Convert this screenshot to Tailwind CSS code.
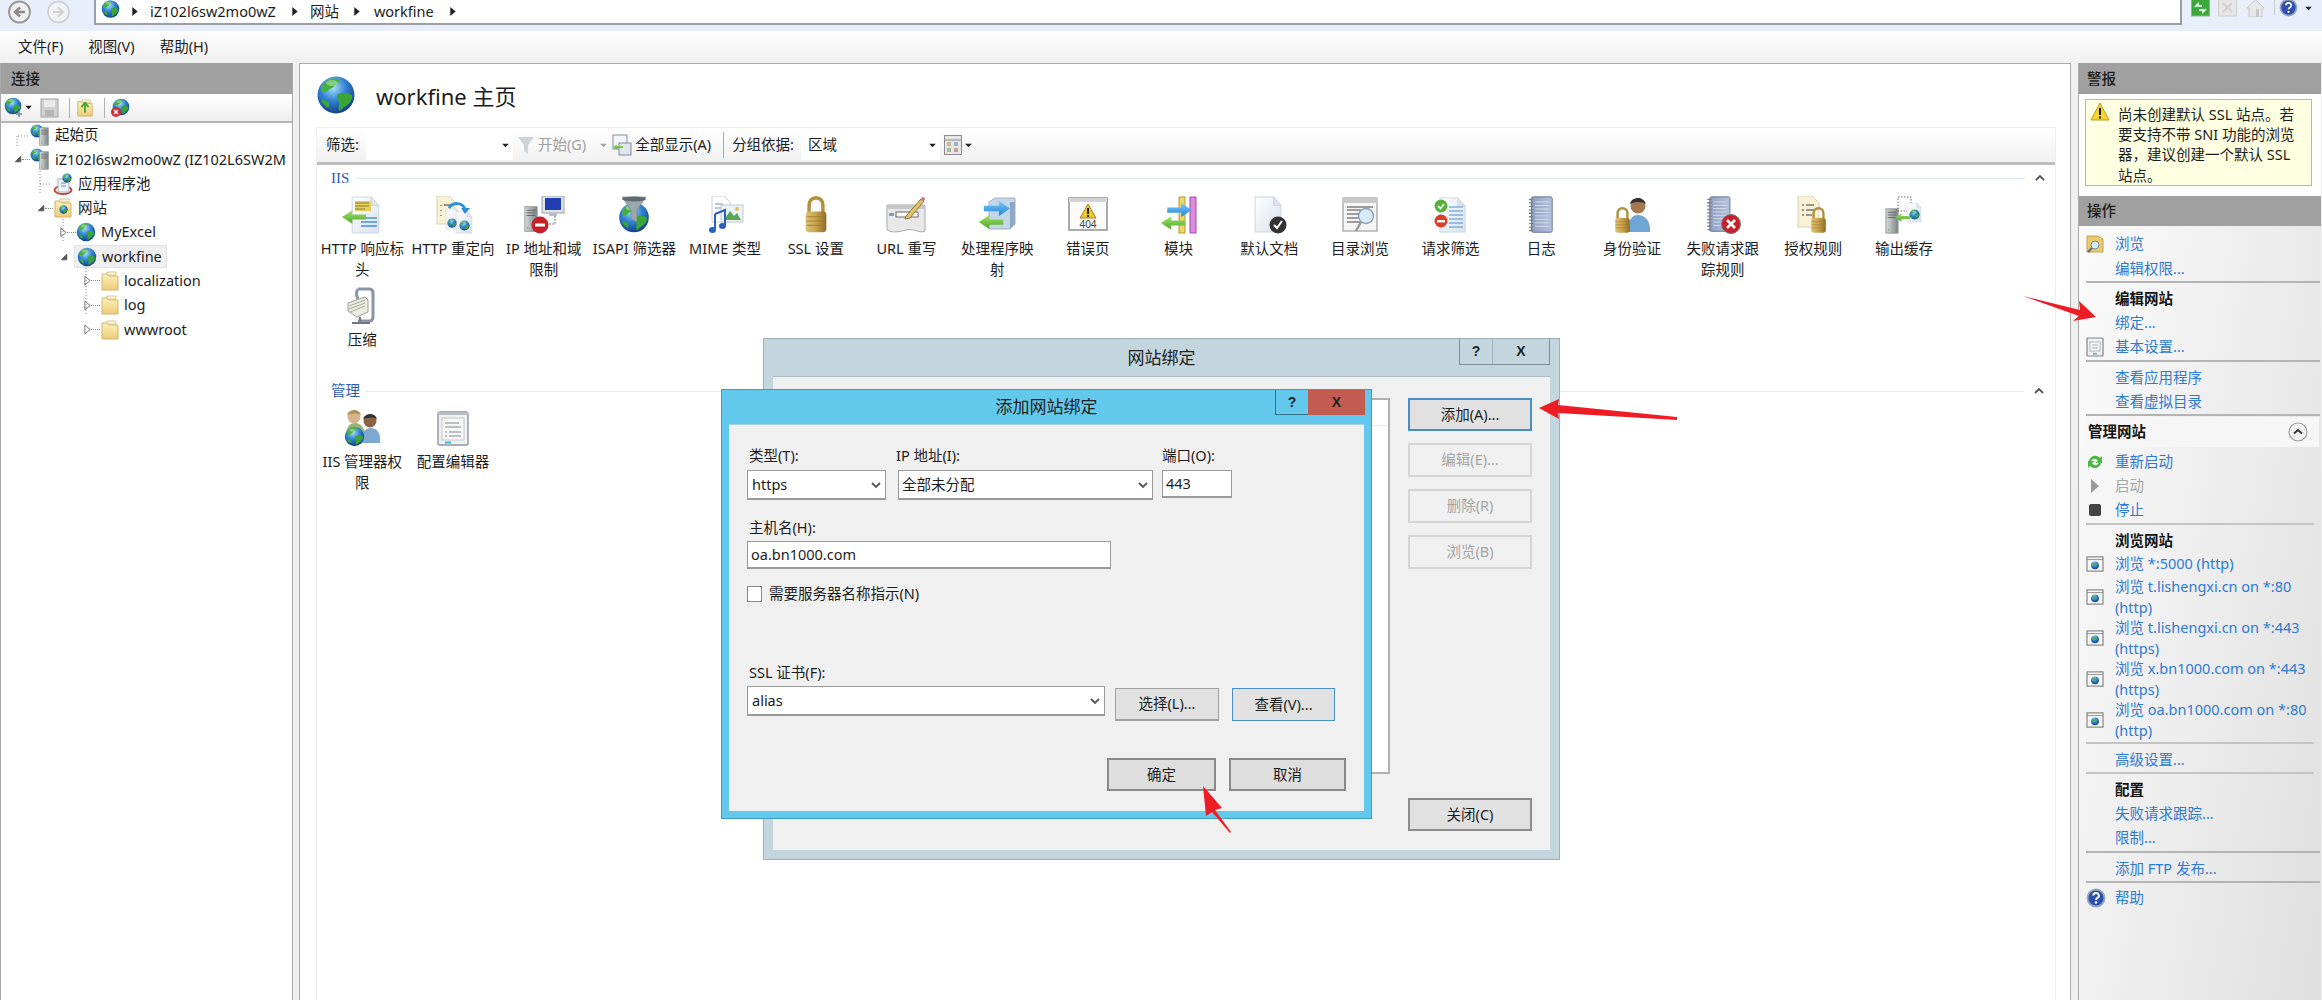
<!DOCTYPE html>
<html lang="zh-CN">
<head>
    <meta charset="UTF-8">
    <title>IIS 管理器</title>
    <script src="https://cdn.jsdelivr.net/npm/@tailwindcss/browser@4"></script>
</head>
<body class="relative w-[2322px] h-[1000px] overflow-hidden bg-[#f0f0f0] text-[14.5px] text-[#1c1c1c] font-['Noto_Sans','Noto_Sans_CJK_SC',sans-serif]">

<!-- shared icons -->
<svg class="absolute w-0 h-0">
    <defs>
        <radialGradient id="gGlobe" cx="0.42" cy="0.3" r="0.8">
            <stop offset="0" stop-color="#a5e0fa"/><stop offset="0.45" stop-color="#2f80d2"/><stop offset="1" stop-color="#0c2f78"/>
        </radialGradient>
        <linearGradient id="gGold" x1="0" y1="0" x2="1" y2="0">
            <stop offset="0" stop-color="#e0c476"/><stop offset="0.5" stop-color="#c9a24c"/><stop offset="1" stop-color="#8e6d28"/>
        </linearGradient>
        <linearGradient id="gPage" x1="0" y1="0" x2="1" y2="1">
            <stop offset="0" stop-color="#ffffff"/><stop offset="1" stop-color="#d8e2ee"/>
        </linearGradient>
        <linearGradient id="gFolder" x1="0" y1="0" x2="0" y2="1">
            <stop offset="0" stop-color="#fdf0bb"/><stop offset="1" stop-color="#eccd78"/>
        </linearGradient>
        <linearGradient id="gBlueArrow" x1="0" y1="0" x2="0" y2="1">
            <stop offset="0" stop-color="#7cc8f5"/><stop offset="1" stop-color="#1f86d8"/>
        </linearGradient>
        <linearGradient id="gGreenArrow" x1="0" y1="0" x2="0" y2="1">
            <stop offset="0" stop-color="#a6e36a"/><stop offset="1" stop-color="#4aa82c"/>
        </linearGradient>
        <linearGradient id="gBook" x1="0" y1="0" x2="1" y2="0">
            <stop offset="0" stop-color="#8e9fc0"/><stop offset="1" stop-color="#b5c3dc"/>
        </linearGradient>
        <linearGradient id="gServer" x1="0" y1="0" x2="1" y2="0">
            <stop offset="0" stop-color="#d8dcdc"/><stop offset="1" stop-color="#7d8585"/>
        </linearGradient>

        <symbol id="globe" viewBox="0 0 40 40">
            <circle cx="20" cy="20" r="18.500" fill="url(#gGlobe)"/>
            <path d="M12 5c4-2 8-2 11 0 1 3-3 4-5 6-1 3-5 2-6 5-2 2-5 1-7 0 0-4 3-9 7-11z" fill="#46b03a"/>
            <path d="M22 19c4-2 10-1 14 1 1 5-3 9-6 11-3 1-4 4-7 5-1-4 1-6 0-9-1-3-3-6-1-8z" fill="#3aa636"/>
            <path d="M5 25c3-1 6 1 8 3 1 2 0 4-1 5-3-2-6-5-7-8z" fill="#3aa636"/>
            <ellipse cx="16" cy="8" rx="6" ry="3" fill="#fff" opacity=".35"/>
        </symbol>

        <symbol id="lock" viewBox="0 0 30 44">
            <path d="M7 20V10a8 8 0 0 1 16 0v10" fill="none" stroke="#b28f3c" stroke-width="4"/>
            <rect x="3" y="18" width="24" height="24" rx="4" fill="url(#gGold)"/>
            <path d="M4 24h22M4 29h22M4 34h22" stroke="#9b7a2e" stroke-width="1"/>
        </symbol>

        <symbol id="page" viewBox="0 0 32 40">
            <path d="M2 1h20l8 9v29H2z" fill="url(#gPage)" stroke="#cdd3da"/>
            <path d="M22 1v9h8z" fill="#dfe5ec" stroke="#cdd3da"/>
        </symbol>

        <symbol id="arrowR" viewBox="0 0 28 16">
            <path d="M0 5h16V0l12 8-12 8v-5H0z" fill="url(#gBlueArrow)"/>
        </symbol>
        <symbol id="arrowL" viewBox="0 0 28 16">
            <path d="M28 5H12V0L0 8l12 8v-5h16z" fill="url(#gGreenArrow)"/>
        </symbol>

        <symbol id="server" viewBox="0 0 16 30">
            <rect x="1" y="1" width="14" height="28" fill="url(#gServer)" stroke="#8a9090"/>
            <path d="M3 5h10M3 8h10M3 11h10" stroke="#555d5d"/>
            <circle cx="4" cy="25" r="1" fill="#5fcf3a"/>
        </symbol>

        <symbol id="book" viewBox="0 0 30 44">
            <rect x="4" y="1" width="24" height="41" rx="2" fill="url(#gBook)" stroke="#56688e"/>
            <path d="M8 7h16M8 11h16M8 15h16M8 19h16M8 23h16M8 27h16M8 31h16M8 35h16" stroke="#dce4f0"/>
            <path d="M1 4h5M1 8h5M1 12h5M1 16h5M1 20h5M1 24h5M1 28h5M1 32h5M1 36h5M1 40h5" stroke="#7c7f88" stroke-width="1.6"/>
        </symbol>

        <symbol id="folder" viewBox="0 0 20 20">
            <path d="M2 3h6l1 2h9v14H2z" fill="url(#gFolder)" stroke="#cfb56a"/>
            <path d="M7 1h9v3H7z" fill="#fff8dc" stroke="#c9b26c" stroke-width=".7"/>
        </symbol>

        <symbol id="win" viewBox="0 0 20 18">
            <rect x="1" y="1" width="18" height="16" fill="#f6f6f6" stroke="#8b8b8b" stroke-width="1.4"/>
            <path d="M1 4h18" stroke="#8b8b8b"/>
            <circle cx="10" cy="10.5" r="4.4" fill="url(#gGlobe)"/>
            <path d="M7.5 8.5c2-1 4-1 4.5 1-1 2-3 1-4.5 1z" fill="#4fae3a"/>
        </symbol>

        <symbol id="help" viewBox="0 0 20 20">
            <circle cx="10" cy="10" r="9.4" fill="#9aa4b8"/>
            <circle cx="10" cy="10" r="7.6" fill="#2c4fb0"/>
            <path d="M7.3 7.6a2.8 2.6 0 1 1 4.1 2.3c-1 .6-1.4 1-1.4 2" fill="none" stroke="#fff" stroke-width="1.9"/>
            <circle cx="10" cy="14.5" r="1.2" fill="#fff"/>
        </symbol>

        <symbol id="chev" viewBox="0 0 10 8">
            <path d="M1 2l4 4 4-4" fill="none" stroke="#555" stroke-width="1.8"/>
        </symbol>
        <symbol id="caret" viewBox="0 0 8 6">
            <path d="M0 1h8L4 5z" fill="#222"/>
        </symbol>
        <symbol id="tri" viewBox="0 0 8 12">
            <path d="M1 1l6 5-6 5z" fill="#fff" stroke="#666"/>
        </symbol>
        <symbol id="triOpen" viewBox="0 0 10 10">
            <path d="M8.5 1.500v7h-7z" fill="#555" stroke="#555"/>
        </symbol>
    </defs>
</svg>

<!-- address bar -->
<div class="flex h-[31px] bg-[#e8effb] overflow-hidden">
    <div class="flex w-[94px] pl-[8px] gap-[16px]">
        <svg class="w-[23px] h-[24px]" viewBox="0 0 23 24"><circle cx="11.500" cy="12" r="10.500" fill="#f0f0f0" stroke="#9a9a9a" stroke-width="2"/><path d="M17 12H8m4-4.500L7 12l5 4.500" fill="none" stroke="#8a8a8a" stroke-width="2.400"/></svg>
        <svg class="w-[23px] h-[24px]" viewBox="0 0 23 24"><circle cx="11.500" cy="12" r="10.500" fill="#f0f2f5" stroke="#cdcdcd" stroke-width="1.500"/><path d="M6 12h9m-4-4.500l5 4.500-5 4.500" fill="none" stroke="#d0d0d0" stroke-width="2"/></svg>
    </div>
    <div class="flex items-center w-[2088px] h-[25px] bg-white border-l-2 border-b-2 border-r-2 border-[#9aa0a6] pl-[5px]">
        <svg class="w-[19px] h-[20px] -mt-[6px]"><use href="#globe"/></svg>
        <svg class="w-[6px] h-[9px] ml-[12px]" viewBox="0 0 6 10"><path d="M0 0l6 5-6 5z" fill="#222"/></svg>
        <span class="ml-[12px]">iZ102l6sw2mo0wZ</span>
        <svg class="w-[6px] h-[9px] ml-[16px]" viewBox="0 0 6 10"><path d="M0 0l6 5-6 5z" fill="#222"/></svg>
        <span class="ml-[12px]">网站</span>
        <svg class="w-[6px] h-[9px] ml-[15px]" viewBox="0 0 6 10"><path d="M0 0l6 5-6 5z" fill="#222"/></svg>
        <span class="ml-[14px]">workfine</span>
        <svg class="w-[6px] h-[9px] ml-[16px]" viewBox="0 0 6 10"><path d="M0 0l6 5-6 5z" fill="#222"/></svg>
    </div>
    <div class="flex items-start pl-[9px]">
        <svg class="w-[19px] h-[17px]" viewBox="0 0 19 17"><rect x=".5" y="-2" width="18" height="18" fill="#3aa83a" stroke="#8fb48f"/><path d="M4 7l3-3v2h4M15 9l-3 3v-2H8" fill="none" stroke="#fff" stroke-width="1.600"/></svg>
        <svg class="w-[19px] h-[17px] ml-[8px]" viewBox="0 0 19 17"><rect x=".5" y="-2" width="18" height="18" fill="#e6e6e6" stroke="#cfcfcf"/><path d="M5 3l9 9M14 3l-9 9" stroke="#cfcfcf" stroke-width="2"/></svg>
        <svg class="w-[19px] h-[17px] ml-[9px]" viewBox="0 0 19 17"><path d="M1 8l8.500-8L18 8h-2v9H3V8z" fill="#e8e8e8" stroke="#c6c6c6"/><rect x="10" y="9" width="3" height="8" fill="#c6c6c6"/></svg>
        <div class="w-[1px] h-[15px] bg-[#c8ccd2] ml-[9px]"></div>
        <svg class="w-[19px] h-[17px] ml-[4px]" viewBox="0 0 20 18"><use href="#help" y="-2" width="20" height="20"/></svg>
        <svg class="w-[7px] h-[5px] ml-[7px] mt-[6px]"><use href="#caret"/></svg>
    </div>
</div>

<!-- menu -->
<div class="flex items-center h-[32px] pl-[18px] gap-[25px] bg-gradient-to-b from-[#fdfdfd] to-[#f0f0f0]">
    <span>文件(F)</span><span>视图(V)</span><span>帮助(H)</span>
</div>

<div class="flex h-[937px]">
    <!-- connections -->
    <div class="w-[293px] bg-white border-r border-[#a9a9a9] border-l border-l-[#a9a9a9]">
        <div class="flex items-center h-[31px] pl-[10px] bg-[#a0a0a0] font-medium">连接</div>
        <div class="flex items-center h-[29px] pl-[3px] bg-gradient-to-b from-white to-[#eeeeee] border-b-2 border-[#b4b4b4]">
            <svg class="w-[19px] h-[22px]" viewBox="0 0 19 22"><use href="#globe" width="18" height="18"/><path d="M12 17h6M15 14v6" stroke="#7a8a9a" stroke-width="1.600"/></svg>
            <svg class="w-[7px] h-[5px] ml-[2px]"><use href="#caret"/></svg>
            <svg class="w-[19px] h-[20px] ml-[8px]" viewBox="0 0 19 20"><rect x="1" y="1" width="17" height="18" fill="#cfcfcf" stroke="#a5a5a5"/><rect x="4" y="2" width="11" height="7" fill="#eaeaea"/><rect x="5" y="12" width="9" height="6" fill="#b5b5b5"/></svg>
            <div class="w-[1px] h-[20px] bg-[#b0b0b0] ml-[10px]"></div>
            <svg class="w-[18px] h-[20px] ml-[6px]" viewBox="0 0 20 20"><use href="#folder"/><path d="M10 15V6M6 9l4-5 4 5" fill="none" stroke="#44a52d" stroke-width="2"/></svg>
            <div class="w-[1px] h-[20px] bg-[#b0b0b0] ml-[10px]"></div>
            <svg class="w-[20px] h-[20px] ml-[5px]" viewBox="0 0 20 20"><use href="#globe" width="18" height="18" x="2"/><circle cx="6" cy="14" r="5" fill="#c83232"/><path d="M4 12l4 4M8 12l-4 4" stroke="#fff" stroke-width="1.300"/></svg>
        </div>

        <div class="relative">
            <svg class="absolute left-0 top-0 w-[120px] h-[220px]" viewBox="0 0 120 220">
                <path d="M16 13v12M39 48v24M62 96v24M85 145v48" fill="none" stroke="#888" stroke-dasharray="1 2"/>
                <path d="M17 13h11" fill="none" stroke="#888" stroke-dasharray="1 2"/>
                <path d="M39 61h12" fill="none" stroke="#888" stroke-dasharray="1 2"/>
            </svg>
            <div class="flex items-center h-[24.3px] pl-[29px]"><svg class="w-[20px] h-[22px]" viewBox="0 0 20 22"><use href="#globe" width="14" height="14" x="0"/><use href="#server" x="9" y="3" width="10" height="19"/></svg><span class="ml-[5px]">起始页</span></div>
            <div class="flex items-center h-[24.3px] pl-[13px]">
                <svg class="w-[8px] h-[8px]"><use href="#triOpen"/></svg><div class="w-[8px] border-t border-dotted border-[#888]"></div>
                <svg class="w-[20px] h-[22px]" viewBox="0 0 20 22"><use href="#globe" width="14" height="14" x="0"/><use href="#server" x="9" y="3" width="10" height="19"/></svg><span class="ml-[5px] whitespace-nowrap overflow-hidden">iZ102l6sw2mo0wZ (IZ102L6SW2M</span>
            </div>
            <div class="flex items-center h-[24.3px] pl-[52px]">
                <svg class="w-[20px] h-[22px]" viewBox="0 0 20 22"><ellipse cx="10" cy="17" rx="8.500" ry="4" fill="none" stroke="#c84a3a" stroke-width="2"/><rect x="5" y="6" width="11" height="13" fill="#eef2f7" stroke="#aab4c0"/><path d="M8 10h5M8 13h5" stroke="#6a8fc0"/><use href="#globe" x="9" y="0" width="10" height="10"/></svg><span class="ml-[5px]">应用程序池</span>
            </div>
            <div class="flex items-center h-[24.3px] pl-[36px]">
                <svg class="w-[8px] h-[8px]"><use href="#triOpen"/></svg><div class="w-[8px] border-t border-dotted border-[#888]"></div>
                <svg class="w-[20px] h-[20px]" viewBox="0 0 20 20"><use href="#folder"/><use href="#globe" x="6" y="7" width="9" height="9"/></svg><span class="ml-[5px]">网站</span>
            </div>
            <div class="flex items-center h-[24.3px] pl-[59px]">
                <svg class="w-[7px] h-[11px]"><use href="#tri"/></svg><div class="w-[9px] border-t border-dotted border-[#888]"></div>
                <svg class="w-[20px] h-[20px]"><use href="#globe"/></svg><span class="ml-[5px]">MyExcel</span>
            </div>
            <div class="flex items-center h-[24.3px] pl-[59px]">
                <svg class="w-[8px] h-[8px]"><use href="#triOpen"/></svg>
                <div class="flex items-center h-[23px] ml-[6px] pl-[2px] w-[93px] bg-[#efefef] border border-[#e2e2e2]">
                    <svg class="w-[20px] h-[20px]"><use href="#globe"/></svg><span class="ml-[5px]">workfine</span>
                </div>
            </div>
            <div class="flex items-center h-[24.3px] pl-[83px]">
                <svg class="w-[7px] h-[11px]"><use href="#tri"/></svg><div class="w-[9px] border-t border-dotted border-[#888]"></div>
                <svg class="w-[20px] h-[20px]"><use href="#folder"/></svg><span class="ml-[4px]">localization</span>
            </div>
            <div class="flex items-center h-[24.3px] pl-[83px]">
                <svg class="w-[7px] h-[11px]"><use href="#tri"/></svg><div class="w-[9px] border-t border-dotted border-[#888]"></div>
                <svg class="w-[20px] h-[20px]"><use href="#folder"/></svg><span class="ml-[4px]">log</span>
            </div>
            <div class="flex items-center h-[24.3px] pl-[83px]">
                <svg class="w-[7px] h-[11px]"><use href="#tri"/></svg><div class="w-[9px] border-t border-dotted border-[#888]"></div>
                <svg class="w-[20px] h-[20px]"><use href="#folder"/></svg><span class="ml-[4px]">wwwroot</span>
            </div>
        </div>
    </div>

    <!-- center pane -->
    <div class="w-[1772px] ml-[6px] bg-white border-l border-r border-t border-[#a9a9a9] overflow-hidden">
        <div class="flex items-center h-[63px] pl-[16px]">
            <svg class="w-[40px] h-[40px] mt-[-2px]"><use href="#globe"/></svg>
            <span class="ml-[20px] text-[22px] leading-none">workfine 主页</span>
        </div>

        <div class="ml-[16px] w-[1740px] h-[873px] border-l border-r border-[#efefef]">
            <div class="flex items-center h-[38px] pl-[9px] border-t border-[#eeeeee] border-b-[3px] border-b-[#bdbdbd] bg-gradient-to-b from-white to-[#f1f1f1]">
                <span>筛选:</span>
                <div class="flex items-center justify-end w-[147px] h-[30px] ml-[7px] pr-[4px] bg-white"><svg class="w-[7px] h-[5px]"><use href="#caret"/></svg></div>
                <svg class="w-[16px] h-[20px] ml-[5px]" viewBox="0 0 16 20"><path d="M0 2h16l-6 8v9l-4-3v-6z" fill="#cfd3d6"/></svg>
                <span class="ml-[4px] text-[#a0a0a0]">开始(G)</span>
                <svg class="w-[7px] h-[5px] ml-[14px] opacity-40"><use href="#caret"/></svg>
                <svg class="w-[20px] h-[22px] ml-[5px]" viewBox="0 0 20 22"><rect x="1" y="1" width="14" height="14" fill="#f4f6fa" stroke="#7f8ea0"/><rect x="7" y="9" width="12" height="12" fill="#dfe6ef" stroke="#7f8ea0"/><use href="#arrowL" x="1" y="10" width="10" height="6"/></svg>
                <span class="ml-[3px]">全部显示(A)</span>
                <div class="w-[1px] h-[26px] bg-[#a9a9a9] ml-[12px]"></div>
                <span class="ml-[8px]">分组依据:</span>
                <div class="flex items-center justify-between w-[139px] h-[30px] ml-[7px] pl-[7px] pr-[4px] bg-white"><span>区域</span><svg class="w-[7px] h-[5px]"><use href="#caret"/></svg></div>
                <svg class="w-[18px] h-[20px] ml-[4px]" viewBox="0 0 18 20"><rect x=".5" y=".5" width="17" height="19" fill="#e6e6e6" stroke="#8c8c8c"/><path d="M1 5h16" stroke="#8c8c8c"/><rect x="3" y="7" width="4" height="4" fill="#c9b98c"/><rect x="10" y="7" width="4" height="4" fill="#9ab4cf"/><rect x="3" y="13" width="4" height="4" fill="#a5bd92"/><rect x="10" y="13" width="4" height="4" fill="#c5a196"/></svg>
                <svg class="w-[7px] h-[5px] ml-[3px]"><use href="#caret"/></svg>
            </div>

            <!-- IIS section -->
            <div class="flex items-center h-[20px] mt-[3px] pl-[14px] pr-[10px]">
                <span class="text-[#2c5bb5] font-['Liberation_Serif',serif] text-[15px]">IIS</span>
                <div class="w-[1674px] h-[1px] bg-[#dce7f8] ml-[7px]"></div>
                <svg class="w-[10px] h-[8px] ml-[10px] rotate-180"><use href="#chev"/></svg>
            </div>
            <div class="grid grid-cols-[repeat(18,90.7px)] auto-rows-[91px] mt-[8px]">
                <div class="flex flex-col items-center"><svg class="w-[44px] h-[38px]" viewBox="0 0 44 38"><use href="#page" x="10" y="0" width="31" height="38"/><rect x="15" y="5" width="16" height="10" fill="#e8cf5a"/><path d="M15 7h14M15 10h14M15 13h10" stroke="#8a7a3a"/><path d="M21 22h16M21 26h16M21 30h16" stroke="#4a90d0" stroke-width="1.400"/><use href="#arrowL" x="2" y="14" width="24" height="14"/></svg><span class="w-[86px] mt-[4px] text-center leading-[21px]">HTTP 响应标头</span></div>
                <div class="flex flex-col items-center"><svg class="w-[44px] h-[38px]" viewBox="0 0 44 38"><path d="M6 0h12l6 6v22H6z" fill="#f8f1d4" stroke="#d8d2b8"/><path d="M10 9v1M10 14v1M10 19v1M13 9h8" stroke="#777" stroke-width="1.500"/><use href="#page" x="14" y="12" width="17" height="22"/><use href="#page" x="24" y="15" width="18" height="23"/><use href="#globe" x="16" y="22" width="10" height="10"/><use href="#globe" x="28" y="24" width="11" height="11"/><path d="M18 12c4-6 13-6 16 1" fill="none" stroke="#2d8fdc" stroke-width="3"/><path d="M30 12h9l-5 6z" fill="#2d8fdc"/></svg><span class="w-[86px] mt-[4px] text-center leading-[21px]">HTTP 重定向</span></div>
                <div class="flex flex-col items-center"><svg class="w-[44px] h-[38px]" viewBox="0 0 44 38"><use href="#server" x="2" y="9" width="14" height="28"/><rect x="20" y="0" width="22" height="17" fill="#dfe4ea" stroke="#9aa2ac"/><rect x="23" y="2" width="16" height="12" fill="#1f3fb0"/><path d="M27 17h8v3h-8z" fill="#b8bec5"/><path d="M33 20v8h-8" fill="none" stroke="#555" stroke-dasharray="1.500 1.500"/><circle cx="18" cy="29" r="8.500" fill="#c8202a"/><rect x="13" y="27.500" width="10" height="3" fill="#fff"/></svg><span class="w-[86px] mt-[4px] text-center leading-[21px]">IP 地址和域限制</span></div>
                <div class="flex flex-col items-center"><svg class="w-[44px] h-[38px]" viewBox="0 0 44 38"><use href="#globe" x="6" y="5" width="32" height="33"/><path d="M10 1h24l-9 13v12l-6-3v-9z" fill="#9aa8ae" stroke="#6f7d85" stroke-width=".6"/><ellipse cx="22" cy="3" rx="12" ry="2.500" fill="#5d6b70"/></svg><span class="w-[86px] mt-[4px] text-center leading-[21px]">ISAPI 筛选器</span></div>
                <div class="flex flex-col items-center"><svg class="w-[44px] h-[38px]" viewBox="0 0 44 38"><path d="M9 0h12l6 6v20H9z" fill="#fff" stroke="#ccd"/><path d="M12 8h8M12 12h10" stroke="#6d94c4"/><rect x="18" y="9" width="22" height="17" fill="#eef3f8" stroke="#bfc7d0"/><path d="M21 24l6-9 4 5 3-3 4 7z" fill="#5aa655"/><circle cx="34" cy="13" r="2" fill="#e0c25a"/><path d="M12 18v15M12 18l10-4v15" fill="none" stroke="#2a5fc0" stroke-width="2"/><ellipse cx="9.500" cy="34" rx="3.500" ry="3" fill="#2a5fc0"/><ellipse cx="19.500" cy="30" rx="3.500" ry="3" fill="#2a5fc0"/></svg><span class="w-[86px] mt-[4px] text-center leading-[21px]">MIME 类型</span></div>
                <div class="flex flex-col items-center"><svg class="w-[44px] h-[38px]" viewBox="0 0 44 38"><use href="#lock" x="9" y="0" width="26" height="38"/></svg><span class="w-[86px] mt-[4px] text-center leading-[21px]">SSL 设置</span></div>
                <div class="flex flex-col items-center"><svg class="w-[44px] h-[38px]" viewBox="0 0 44 38"><path d="M3 9h38v26c-6 3-10-3-19-1-8 2-13 3-19 0z" fill="#e8e8e8" stroke="#a8a8a8"/><path d="M3 9h38v4H3z" fill="#c7c7c7"/><rect x="12" y="16" width="22" height="5" fill="#fff" stroke="#666"/><rect x="5" y="17" width="5" height="3" fill="#6aa7d8"/><path d="M22 20L37 3l3 2-14 17-5 1z" fill="#e2c16a" stroke="#8d7430"/><circle cx="39" cy="3" r="2" fill="#d07a7a"/></svg><span class="w-[86px] mt-[4px] text-center leading-[21px]">URL 重写</span></div>
                <div class="flex flex-col items-center"><svg class="w-[44px] h-[38px]" viewBox="0 0 44 38"><path d="M14 6l6-4h20v26l-5 5H14z" fill="#c3d6ea" stroke="#9db2c9"/><path d="M35 6h5v22l-5 5z" fill="#8fa9c4"/><use href="#arrowR" x="8" y="5" width="28" height="15"/><use href="#arrowL" x="3" y="19" width="26" height="14"/></svg><span class="w-[86px] mt-[4px] text-center leading-[21px]">处理程序映射</span></div>
                <div class="flex flex-col items-center"><svg class="w-[44px] h-[38px]" viewBox="0 0 44 38"><rect x="3" y="2" width="38" height="32" fill="#fbfbfb" stroke="#888" stroke-width="1.400"/><rect x="3" y="2" width="38" height="4" fill="#d4d4d4"/><path d="M22 8l8 14H14z" fill="#f3c927" stroke="#9d8320"/><path d="M22 12v6M22 19v2" stroke="#111" stroke-width="1.800"/><text x="22" y="32" text-anchor="middle" font-size="10" fill="#444">404</text></svg><span class="w-[86px] mt-[4px] text-center leading-[21px]">错误页</span></div>
                <div class="flex flex-col items-center"><svg class="w-[44px] h-[38px]" viewBox="0 0 44 38"><rect x="22" y="1" width="6" height="36" fill="#edd66a" stroke="#b69b30"/><rect x="33" y="1" width="6" height="36" fill="#da8bdb" stroke="#a34fa5"/><use href="#arrowR" x="10" y="7" width="25" height="14"/><use href="#arrowL" x="4" y="20" width="24" height="14"/></svg><span class="w-[86px] mt-[4px] text-center leading-[21px]">模块</span></div>
                <div class="flex flex-col items-center"><svg class="w-[44px] h-[38px]" viewBox="0 0 44 38"><use href="#page" x="6" y="0" width="30" height="37"/><circle cx="31" cy="29" r="8.500" fill="#333"/><path d="M27 29l3 3 5-7" fill="none" stroke="#fff" stroke-width="2"/></svg><span class="w-[86px] mt-[4px] text-center leading-[21px]">默认文档</span></div>
                <div class="flex flex-col items-center"><svg class="w-[44px] h-[38px]" viewBox="0 0 44 38"><rect x="5" y="2" width="34" height="33" fill="#f5f5f5" stroke="#8c8c8c"/><rect x="5" y="2" width="34" height="5" fill="#c8c8c8"/><path d="M9 11h26M9 14h14M9 18h14M9 22h14M9 26h14" stroke="#444"/><circle cx="28" cy="20" r="7.500" fill="#d8ecf8" stroke="#8aa2b5" stroke-width="1.400"/><path d="M23 26l-5 9" stroke="#999" stroke-width="2.500"/></svg><span class="w-[86px] mt-[4px] text-center leading-[21px]">目录浏览</span></div>
                <div class="flex flex-col items-center"><svg class="w-[44px] h-[38px]" viewBox="0 0 44 38"><use href="#page" x="9" y="1" width="29" height="36"/><path d="M20 11h14M20 15h14M20 19h14M20 23h14M20 27h14M20 31h14" stroke="#4a90d0"/><circle cx="12" cy="10" r="6.500" fill="#5ab03c"/><path d="M9 10l2.500 2.500L15 8" fill="none" stroke="#fff" stroke-width="1.600"/><circle cx="12" cy="25" r="6.500" fill="#d8402a"/><rect x="8" y="24" width="8" height="2.400" fill="#fff"/></svg><span class="w-[86px] mt-[4px] text-center leading-[21px]">请求筛选</span></div>
                <div class="flex flex-col items-center"><svg class="w-[44px] h-[38px]" viewBox="0 0 44 38"><use href="#book" x="9" y="0" width="26" height="38"/></svg><span class="w-[86px] mt-[4px] text-center leading-[21px]">日志</span></div>
                <div class="flex flex-col items-center"><svg class="w-[44px] h-[38px]" viewBox="0 0 44 38"><path d="M19 36c-2-11 3-17 9-17s13 5 12 17z" fill="#6fa6d4"/><circle cx="28" cy="10" r="7.500" fill="#a67850"/><path d="M20 8c1-7 13-9 16 0-3-2-9-3-16 0z" fill="#333"/><use href="#lock" x="3" y="11" width="19" height="27"/></svg><span class="w-[86px] mt-[4px] text-center leading-[21px]">身份验证</span></div>
                <div class="flex flex-col items-center"><svg class="w-[44px] h-[38px]" viewBox="0 0 44 38"><use href="#book" x="5" y="0" width="26" height="37"/><circle cx="30" cy="28" r="9.500" fill="#c8202a" stroke="#777"/><path d="M26 24l8 8M34 24l-8 8" stroke="#fff" stroke-width="2.600"/></svg><span class="w-[86px] mt-[4px] text-center leading-[21px]">失败请求跟踪规则</span></div>
                <div class="flex flex-col items-center"><svg class="w-[44px] h-[38px]" viewBox="0 0 44 38"><path d="M7 0h14l7 7v24H7z" fill="#f8f1d4" stroke="#d8d2b8"/><path d="M11 9h2M15 9h8M11 14h2M15 14h8M11 19h2M15 19h6" stroke="#777" stroke-width="1.400"/><use href="#lock" x="18" y="11" width="19" height="27"/></svg><span class="w-[86px] mt-[4px] text-center leading-[21px]">授权规则</span></div>
                <div class="flex flex-col items-center"><svg class="w-[44px] h-[38px]" viewBox="0 0 44 38"><use href="#server" x="3" y="12" width="14" height="26"/><path d="M16 1h13v14H16z" fill="none" stroke="#666" stroke-dasharray="1.500 1.500"/><use href="#page" x="24" y="6" width="16" height="21"/><use href="#globe" x="27" y="13" width="11" height="11"/><use href="#arrowL" x="13" y="17" width="15" height="9"/></svg><span class="w-[86px] mt-[4px] text-center leading-[21px]">输出缓存</span></div>
                <div class="flex flex-col items-center"><svg class="w-[44px] h-[38px]" viewBox="0 0 44 38"><path d="M18 2h11c3 0 4 2 4 4v24c0 2-1 4-4 4H18" fill="none" stroke="#8b95a8" stroke-width="3"/><path d="M18 2c-2 3-2 6 0 10" fill="none" stroke="#8b95a8" stroke-width="3"/><path d="M8 16l17-6 3 3v12L17 30 8 24z" fill="#eceee2" stroke="#9b9f90"/><path d="M9 19l16-6M9 22l16-6M10 25l15-6" stroke="#a5a89a"/><path d="M20 30v4M12 36h18" stroke="#6f7784" stroke-width="2"/></svg><span class="w-[86px] mt-[4px] text-center leading-[21px]">压缩</span></div>
            </div>

            <!-- 管理 section -->
            <div class="flex items-center h-[20px] mt-[3px] pl-[14px] pr-[10px]">
                <span class="text-[#2c5bb5]">管理</span>
                <div class="w-[1658px] h-[1px] bg-[#dce7f8] ml-[6px]"></div>
                <svg class="w-[10px] h-[8px] ml-[10px] rotate-180"><use href="#chev"/></svg>
            </div>
            <div class="grid grid-cols-[repeat(18,90.7px)] mt-[8px]">
                <div class="flex flex-col items-center"><svg class="w-[44px] h-[38px]" viewBox="0 0 44 38"><path d="M7 28c-2-9 2-14 8-14s10 5 10 14z" fill="#9ab56c"/><circle cx="14" cy="8" r="6.500" fill="#d8b48c"/><path d="M7 6c2-6 12-7 14 0-4-2-9-2-14 0z" fill="#a8935a"/><path d="M22 34c-2-10 3-15 9-15s10 5 9 15z" fill="#7da8d0"/><circle cx="30" cy="12" r="6.500" fill="#8d6444"/><path d="M23 10c2-6 12-7 14 0-4-2-9-2-14 0z" fill="#333"/><use href="#globe" x="4" y="17" width="21" height="21"/></svg><span class="w-[86px] mt-[4px] text-center leading-[21px]">IIS 管理器权限</span></div>
                <div class="flex flex-col items-center"><svg class="w-[44px] h-[38px]" viewBox="0 0 44 38"><rect x="7" y="3" width="30" height="33" rx="2" fill="#eef0f2" stroke="#8d949c" stroke-width="1.400"/><rect x="7" y="3" width="30" height="3" fill="#b8bdc3"/><rect x="11" y="9" width="22" height="22" fill="#f7f7f7" stroke="#c8c8c8"/><path d="M14 14h14M14 18h16M14 23h2M18 23h12M14 27h2M18 27h12" stroke="#a9adb3" stroke-width="1.400"/><rect x="14" y="32.500" width="6" height="2" fill="#3ab4e6"/></svg><span class="w-[86px] mt-[4px] text-center leading-[21px]">配置编辑器</span></div>
            </div>
        </div>
    </div>

    <!-- right pane -->
    <div class="w-[243px] ml-[7px] bg-white border-l border-[#a9a9a9]">
        <div class="flex items-center h-[31px] pl-[8px] bg-[#a0a0a0] font-medium">警报</div>
        <div class="h-[102px] pt-[5px] pl-[6px] pr-[9px]">
            <div class="flex w-[227px] h-[87px] bg-[#ffffe1] border border-[#b8b8a0]">
                <svg class="w-[20px] h-[19px] ml-[4px] mt-[2px] shrink-0" viewBox="0 0 20 19"><path d="M10 1l9 17H1z" fill="#f6d32d" stroke="#b89c1e"/><path d="M10 6v7M10 14.500v2" stroke="#111" stroke-width="2"/></svg>
                <p class="ml-[8px] mt-[3.500px] leading-[20.400px] whitespace-nowrap">尚未创建默认 SSL 站点。若<br>要支持不带 SNI 功能的浏览<br>器，建议创建一个默认 SSL<br>站点。</p>
            </div>
        </div>
        <div class="flex items-center h-[30px] pl-[8px] bg-[#a0a0a0] font-medium">操作</div>

        <div class="h-[774px] pl-[7px] pr-[1px] pt-[6px] text-[#2f7ad0] bg-[linear-gradient(100deg,#fbfbfb,#dfdfdf)]">
            <div class="flex items-center h-[24px]"><svg class="w-[18px] h-[20px] shrink-0" viewBox="0 0 18 20"><path d="M1 2h11l5 3v13H1z" fill="#eccb6e" stroke="#bfa14e"/><circle cx="9" cy="11" r="4" fill="#d6ecf8" stroke="#6f8ba0"/><path d="M6 14l-4 4" stroke="#666" stroke-width="2"/></svg><span class="ml-[11px]">浏览</span></div>
            <div class="h-[24px] pl-[29px] leading-[24px]">编辑权限...</div>
            <div class="h-[2px] mt-[1px] mb-[3px] bg-[#b4b4b4]"></div>
            <div class="h-[24px] pl-[29px] leading-[24px] text-[#111] font-semibold">编辑网站</div>
            <div class="h-[24px] pl-[29px] leading-[24px]">绑定...</div>
            <div class="flex items-center h-[25px]"><svg class="w-[18px] h-[20px] shrink-0" viewBox="0 0 18 20"><rect x="1" y="1" width="16" height="18" rx="1" fill="#eef0f2" stroke="#7f868e" stroke-width="1.200"/><rect x="4" y="5" width="10" height="9" fill="#fafafa" stroke="#b0b4ba"/><path d="M6 8h6M6 11h6" stroke="#9aa"/><rect x="7" y="16" width="4" height="1.500" fill="#3ab4e6"/></svg><span class="ml-[11px]">基本设置...</span></div>
            <div class="h-[2px] mt-[1px] mb-[3px] bg-[#b4b4b4]"></div>
            <div class="h-[24px] pl-[29px] leading-[24px]">查看应用程序</div>
            <div class="h-[24px] pl-[29px] leading-[24px]">查看虚拟目录</div>
            <div class="h-[2px] mt-[1px] bg-[#b4b4b4]"></div>
            <div class="flex items-center justify-between h-[30px] mt-[1px] pl-[2px] pr-[11px] mr-[1px] bg-[#f6f6f6] text-[#111] font-semibold">
                <span>管理网站</span>
                <svg class="w-[20px] h-[20px]" viewBox="0 0 20 20"><circle cx="10" cy="10" r="9" fill="#f1f1f1" stroke="#9c9c9c" stroke-width="1.200"/><path d="M6 11.500L10 8l4 3.500" fill="none" stroke="#333" stroke-width="1.800"/></svg>
            </div>
            <div class="flex items-center h-[24px] mt-[3px]"><svg class="w-[18px] h-[20px] shrink-0" viewBox="0 0 18 20"><path d="M3 9c1-5 7-7 11-3l2-2v7H9l3-2C10 6 6 6 5 10z" fill="#4cb843"/><path d="M15 11c-1 5-7 7-11 3l-2 2V9h7l-3 2c2 3 6 3 7-1z" fill="#4cb843"/></svg><span class="ml-[11px]">重新启动</span></div>
            <div class="flex items-center h-[24px] text-[#a8a8a8]"><svg class="w-[18px] h-[20px] shrink-0" viewBox="0 0 18 20"><path d="M5 3l8 7-8 7z" fill="#9a9a9a"/></svg><span class="ml-[11px]">启动</span></div>
            <div class="flex items-center h-[24px]"><svg class="w-[18px] h-[20px] shrink-0" viewBox="0 0 18 20"><rect x="3" y="4" width="12" height="12" rx="2" fill="#444"/></svg><span class="ml-[11px]">停止</span></div>
            <div class="h-[2px] mt-[1px] mb-[3px] mr-[6px] bg-[#c4c4c4]"></div>
            <div class="h-[24px] pl-[29px] leading-[24px] text-[#111] font-semibold">浏览网站</div>
            <div class="flex items-center h-[24px]"><svg class="w-[18px] h-[16px] shrink-0"><use href="#win"/></svg><span class="ml-[11px]">浏览 *:5000 (http)</span></div>
            <div class="flex items-center h-[41px]"><svg class="w-[18px] h-[16px] shrink-0"><use href="#win"/></svg><span class="ml-[11px] leading-[20.500px]">浏览 t.lishengxi.cn on *:80<br>(http)</span></div>
            <div class="flex items-center h-[41px]"><svg class="w-[18px] h-[16px] shrink-0"><use href="#win"/></svg><span class="ml-[11px] leading-[20.500px]">浏览 t.lishengxi.cn on *:443<br>(https)</span></div>
            <div class="flex items-center h-[41px]"><svg class="w-[18px] h-[16px] shrink-0"><use href="#win"/></svg><span class="ml-[11px] leading-[20.500px]">浏览 x.bn1000.com on *:443<br>(https)</span></div>
            <div class="flex items-center h-[41px]"><svg class="w-[18px] h-[16px] shrink-0"><use href="#win"/></svg><span class="ml-[11px] leading-[20.500px]">浏览 oa.bn1000.com on *:80<br>(http)</span></div>
            <div class="h-[2px] mt-[2px] mb-[3px] mr-[6px] bg-[#c4c4c4]"></div>
            <div class="h-[24px] pl-[29px] leading-[24px]">高级设置...</div>
            <div class="h-[2px] mt-[1px] mb-[3px] mr-[6px] bg-[#c4c4c4]"></div>
            <div class="h-[24px] pl-[29px] leading-[24px] text-[#111] font-semibold">配置</div>
            <div class="h-[24px] pl-[29px] leading-[24px]">失败请求跟踪...</div>
            <div class="h-[24px] pl-[29px] leading-[24px]">限制...</div>
            <div class="h-[2px] mt-[2px] mb-[3px] bg-[#b4b4b4]"></div>
            <div class="h-[24px] pl-[29px] leading-[24px]">添加 FTP 发布...</div>
            <div class="h-[2px] mt-[1px] mb-[3px] bg-[#b4b4b4]"></div>
            <div class="flex items-center h-[24px]"><svg class="w-[20px] h-[20px] shrink-0"><use href="#help"/></svg><span class="ml-[9px]">帮助</span></div>
        </div>
    </div>
</div>

<!-- 网站绑定 dialog -->
<div class="absolute left-[763px] top-[338px] w-[797px] h-[522px] bg-[#c3d6dd] border border-[#9fb0b8] flex flex-col">
    <div class="relative flex items-center justify-center h-[37px] text-[17px] text-[#222]">
        网站绑定
        <div class="absolute right-[9px] top-0 flex h-[26px] border border-t-0 border-[#7f8f96] font-['Liberation_Sans',sans-serif] font-bold text-[14px]">
            <span class="flex items-center justify-center w-[33px] border-r border-[#a0b0b7]">?</span>
            <span class="flex items-center justify-center w-[56px]">X</span>
        </div>
    </div>
    <div class="flex mx-[9px] h-[474px] pt-[21px] bg-[#f0f0f0] border-t border-[#aebcc3]">
        <div class="w-[609px] h-[376px] ml-[8px] pt-[25px] bg-white border-2 border-[#b0b0b0]">
            <div class="h-[1px] bg-[#e8e8e8]"></div>
        </div>
        <div class="flex flex-col w-[124px] h-[433px] ml-[18px] gap-[12px]">
            <div class="flex items-center justify-center h-[33px] bg-[#e1e1e1] border-2 border-[#4a8fc4]">添加(A)...</div>
            <div class="flex items-center justify-center h-[34px] text-[#a5a5a5] border-2 border-[#d4d4d4]">编辑(E)...</div>
            <div class="flex items-center justify-center h-[34px] text-[#a5a5a5] border-2 border-[#d4d4d4]">删除(R)</div>
            <div class="flex items-center justify-center h-[34px] text-[#a5a5a5] border-2 border-[#d4d4d4]">浏览(B)</div>
            <div class="flex items-center justify-center h-[33px] mt-auto bg-[#e1e1e1] border-2 border-[#8c8c8c]">关闭(C)</div>
        </div>
    </div>
</div>

<!-- 添加网站绑定 dialog -->
<div class="absolute left-[721px] top-[389px] w-[651px] h-[430px] bg-[#63c9ec] border border-[#3f9cc0] flex flex-col">
    <div class="relative flex items-center justify-center h-[34px] text-[17px] text-[#222]">
        添加网站绑定
        <div class="absolute right-[6px] top-0 flex h-[25px] font-['Liberation_Sans',sans-serif] font-bold text-[14px]">
            <span class="flex items-center justify-center w-[33px] border border-t-0 border-r-0 border-[#2f6f88]">?</span>
            <span class="flex items-center justify-center w-[57px] bg-[#c25b50]">X</span>
        </div>
    </div>
    <div class="mx-[7px] w-[635px] h-[387px] pl-[18px] pt-[20px] bg-[#f0f0f0] border-t border-[#a8d0de]">
        <div class="flex">
            <div class="w-[139px]">
                <div class="h-[25px] pl-[2px] leading-[20px]">类型(T):</div>
                <div class="flex items-center justify-between h-[30px] pl-[4px] pr-[4px] bg-white border border-b-2 border-[#9a9a9a]"><span>https</span><svg class="w-[10px] h-[8px]"><use href="#chev"/></svg></div>
            </div>
            <div class="w-[255px] ml-[12px]">
                <div class="h-[25px] -ml-[2px] leading-[20px]">IP 地址(I):</div>
                <div class="flex items-center justify-between h-[30px] pl-[3px] pr-[4px] bg-white border border-b-2 border-[#9a9a9a]"><span>全部未分配</span><svg class="w-[10px] h-[8px]"><use href="#chev"/></svg></div>
            </div>
            <div class="w-[70px] ml-[9px]">
                <div class="h-[25px] leading-[20px]">端口(O):</div>
                <div class="flex items-center h-[28px] pl-[3px] bg-white border border-b-2 border-[#9a9a9a]">443</div>
            </div>
        </div>
        <div class="h-[24px] mt-[17px] pl-[2px] leading-[20px]">主机名(H):</div>
        <div class="flex items-center w-[364px] h-[28px] pl-[3px] bg-white border border-b-2 border-[#9a9a9a]">oa.bn1000.com</div>
        <div class="flex items-center h-[16px] mt-[17px]">
            <div class="w-[15px] h-[16px] bg-white border border-[#8a8a8a]"></div>
            <span class="ml-[7px]">需要服务器名称指示(N)</span>
        </div>
        <div class="h-[24px] mt-[60px] pl-[2px] leading-[20px]">SSL 证书(F):</div>
        <div class="flex items-start">
            <div class="flex items-center justify-between w-[358px] h-[30px] pl-[4px] pr-[4px] bg-white border border-b-2 border-[#9a9a9a]"><span>alias</span><svg class="w-[10px] h-[8px]"><use href="#chev"/></svg></div>
            <div class="flex items-center justify-center w-[104px] h-[33px] ml-[10px] mt-[2px] bg-[#e1e1e1] border border-b-2 border-[#a0a0a0]">选择(L)...</div>
            <div class="flex items-center justify-center w-[103px] h-[33px] ml-[13px] mt-[2px] bg-[#e1e1e1] border border-[#4a8fc4]">查看(V)...</div>
        </div>
        <div class="flex justify-end w-[599px] mt-[37px]">
            <div class="flex items-center justify-center w-[109px] h-[33px] bg-[#dedede] border-2 border-[#8a8a8a]">确定</div>
            <div class="flex items-center justify-center w-[117px] h-[33px] ml-[13px] bg-[#dedede] border-2 border-[#8a8a8a]">取消</div>
        </div>
    </div>
</div>

<!-- red annotation arrows -->
<svg class="absolute left-0 top-0 w-[2322px] h-[1000px] pointer-events-none" viewBox="0 0 2322 1000">
    <path d="M2023 296L2080 310 2079 301 2096 317 2073 321 2079 316z" fill="#ee1c25"/>
    <path d="M1539 408L1559 399 1558 405 1677 417 1677 420 1558 413 1559 419z" fill="#ee1c25"/>
    <path d="M1203 786L1222 808 1215 810 1231 832 1230 833 1212 812 1206 816z" fill="#ee1c25"/>
</svg>

</body>
</html>
